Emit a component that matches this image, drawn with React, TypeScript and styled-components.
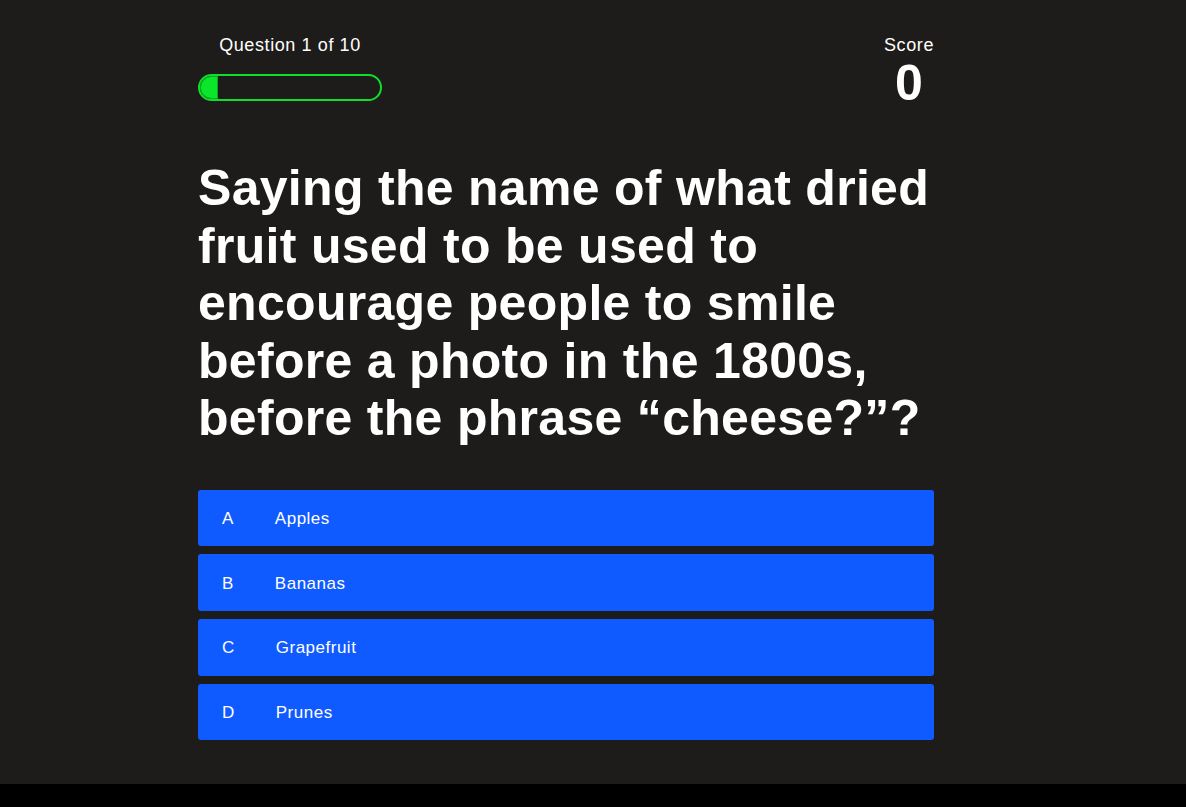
import React from "react";
import styled, { createGlobalStyle } from "styled-components";

const Global = createGlobalStyle`
  html, body { margin: 0; padding: 0; background: #000; }
  body { font-family: "Liberation Sans", Arial, sans-serif; color: #fff; }
`;

const Page = styled.main`
  background: #1d1c1a;
  height: 784px;
  box-sizing: border-box;
  padding: 35px 0 44px 198px;
`;

const Column = styled.div`
  width: 736px;
`;

const Header = styled.header`
  display: flex;
  justify-content: space-between;
  align-items: flex-start;
`;

const ProgressBlock = styled.div`
  display: flex;
  flex-direction: column;
  align-items: center;
  width: 184px;
  gap: 18px;
`;

const Label = styled.div`
  font-size: 18px;
  line-height: 21px;
  letter-spacing: 0.6px;
`;

const Track = styled.div`
  box-sizing: border-box;
  width: 184px;
  height: 27px;
  border: 2px solid #0ee02a;
  border-radius: 14px;
  overflow: hidden;
  display: flex;
`;

const Fill = styled.div`
  height: 100%;
  background: #0be52a;
  border-radius: 12px 0 0 12px;
  box-shadow: inset 0 0 0 1px #0aa824;
`;

const ScoreBlock = styled.div`
  display: flex;
  flex-direction: column;
  align-items: center;
`;

const ScoreValue = styled.div`
  font-size: 50px;
  font-weight: 700;
  line-height: 54px;
`;

const Question = styled.h1`
  margin: 50px 0 42px;
  font-size: 50px;
  line-height: 57.5px;
  letter-spacing: 0.3px;
  font-weight: 700;
`;

const Options = styled.div`
  display: flex;
  flex-direction: column;
  gap: 8px;
`;

const Option = styled.button`
  display: flex;
  align-items: center;
  height: 56.7px;
  padding: 2px 24px 0;
  border: none;
  border-radius: 3px;
  background: #105bff;
  color: #fff;
  font-family: "Liberation Sans", Arial, sans-serif;
  font-size: 17px;
  letter-spacing: 0.5px;
  text-align: left;
  cursor: pointer;
`;

const Letter = styled.span`
  margin-right: 41px;
`;

const options = [
  ["A", "Apples"],
  ["B", "Bananas"],
  ["C", "Grapefruit"],
  ["D", "Prunes"],
];

export default function App() {
  const progress = 1 / 10;
  return (
    <>
      <Global />
      <Page>
        <Column>
          <Header>
            <ProgressBlock>
              <Label>Question 1 of 10</Label>
              <Track>
                <Fill style={{ width: `${progress * 100}%` }} />
              </Track>
            </ProgressBlock>
            <ScoreBlock>
              <Label>Score</Label>
              <ScoreValue>0</ScoreValue>
            </ScoreBlock>
          </Header>
          <Question>
            Saying the name of what dried fruit used to be used to encourage people to smile before a photo in the 1800s, before the phrase “cheese?”?
          </Question>
          <Options>
            {options.map(([l, t]) => (
              <Option key={l}>
                <Letter>{l}</Letter>
                {t}
              </Option>
            ))}
          </Options>
        </Column>
      </Page>
    </>
  );
}
